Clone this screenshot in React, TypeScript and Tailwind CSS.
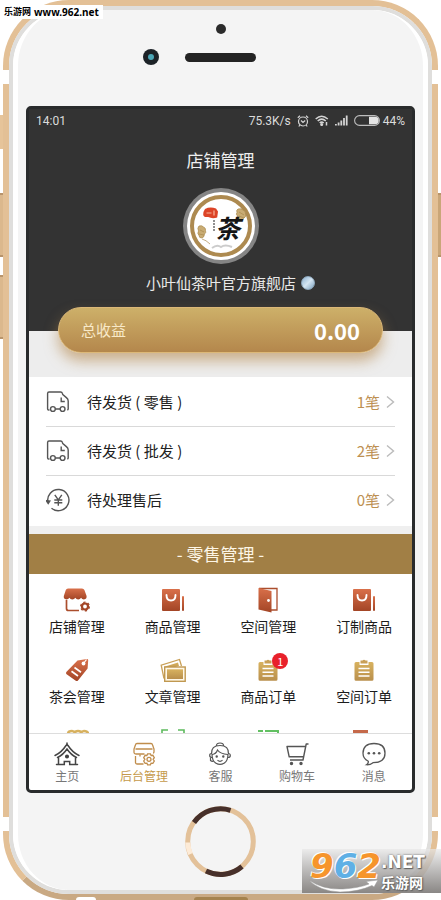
import type { ReactNode } from "react";

interface Todo {
  label: string;
  count: string;
  icon: ReactNode;
}

interface Entry {
  label: string;
  icon: ReactNode;
  badge?: number;
}

function Gradients() {
  return (
    <svg width="0" height="0" className="absolute" aria-hidden="true">
      <defs>
        <linearGradient id="red" x1="0" y1="0" x2="0" y2="1">
          <stop offset="0" stopColor="#d9704a" />
          <stop offset="1" stopColor="#a34526" />
        </linearGradient>
        <linearGradient id="gold" x1="0" y1="0" x2="0" y2="1">
          <stop offset="0" stopColor="#d8b25f" />
          <stop offset="1" stopColor="#b98f4c" />
        </linearGradient>
      </defs>
    </svg>
  );
}

/* ── List icons ─────────────────────────────────────────────── */

function TruckIcon() {
  return (
    <svg width="24" height="24" viewBox="0 0 24 24" fill="none" stroke="#555" strokeWidth="1.4" aria-hidden="true">
      <path d="M3.5 20H2.6Q1.6 20 1.6 19V3.4Q1.6 2 3 2h11.6q1.4 0 1.8 1.4l.4 1.2 3.6 3q1.8 1.5 1.8 3.4V19q0 .8-1 .8" />
      <path d="M15.2 7.5v4h3.6M9.3 19h4.9" />
      <circle cx="6.9" cy="19" r="2.4" />
      <circle cx="16.6" cy="19" r="2.4" />
    </svg>
  );
}

function RefundIcon() {
  return (
    <svg width="24" height="24" viewBox="0 0 24 24" fill="none" stroke="#555" strokeWidth="1.4" aria-hidden="true">
      <path d="M2 14.5A10.6 10.6 0 1 1 5.5 20.2" />
      <path d="M.3 12.6 3.8 13l-1.6 2.4z" fill="#555" />
      <path d="M8.8 6.8l3.5 5 3.5-5M12.3 11.8v6M8.3 12h8M8.3 14.8h8" />
    </svg>
  );
}

function Arrow() {
  return (
    <svg width="9" height="14" viewBox="0 0 9 14" fill="none" stroke="#bbb" strokeWidth="1.4" aria-hidden="true">
      <path d="M1 1.5 7.5 7 1 12.5" />
    </svg>
  );
}

/* ── Grid icons ─────────────────────────────────────────────── */

function StoreIcon() {
  return (
    <svg width="28" height="24" viewBox="0 0 28 24" fill="none" aria-hidden="true">
      <path
        d="M5 .5h14q1.8 0 2.4 1.6L23.6 8q.3 3.2-2.7 3.4-2 0-2.8-1.6-1 1.6-2.9 1.6T12.3 9.8q-1 1.6-3 1.6T6.4 9.8q-1 1.6-3 1.6Q.4 11.2.8 8L2.8 2.1Q3.4.5 5 .5z"
        fill="url(#red)"
      />
      <path d="M3.5 12v8.5q0 2 2 2H16" stroke="#ab4e2d" strokeWidth="1.7" />
      <circle cx="22" cy="18.5" r="3" stroke="#a34526" strokeWidth="2.2" />
      <circle cx="22" cy="18.5" r="4.4" stroke="#a34526" strokeWidth="1.2" strokeDasharray="2.3 2.3" />
    </svg>
  );
}

function BagIcon() {
  return (
    <svg width="24" height="24" viewBox="0 0 24 24" fill="none" aria-hidden="true">
      <rect x="1" y="1" width="18" height="22" rx="1" fill="url(#red)" />
      <path d="M5.5 7q0 5.5 4.5 5.5T14.5 7" stroke="#fff" strokeWidth="1.9" strokeLinecap="round" />
      <rect x="21" y="8" width="2" height="15" rx="1" fill="url(#red)" />
    </svg>
  );
}

function DoorIcon() {
  return (
    <svg width="24" height="26" viewBox="0 0 24 26" fill="none" aria-hidden="true">
      <path d="M3 1.5h18V23h-6" stroke="#ab4e2d" strokeWidth="1.3" />
      <path d="M2.5 1 15.5 4v21.5L2.5 22.5z" fill="url(#red)" />
      <circle cx="12.5" cy="13.5" r="1.4" fill="#fff" />
    </svg>
  );
}

function TagIcon() {
  return (
    <svg width="24" height="24" viewBox="0 0 24 24" fill="none" aria-hidden="true">
      <path d="M12.5 2.5 22 1q1.3 0 1.2 1.3l-.6 8.2L13 22.5q-1 1-2.2.2L1.6 16.2q-1.1-1-.3-2.2z" fill="url(#red)" />
      <circle cx="18.5" cy="5.5" r="1.9" fill="#fff" />
      <path d="M18.5 5.5 21.5 1.5" stroke="#fff" strokeWidth="1.2" />
      <path d="M9.5 9.5l6.5 4.7M6.5 13.3l6.5 4.7" stroke="#fff" strokeWidth="1.7" />
    </svg>
  );
}

function PicturesIcon() {
  return (
    <svg width="26" height="24" viewBox="0 0 26 24" fill="none" aria-hidden="true">
      <path d="M4 20.5 1.2 7.2 19.5 1.5l2 6.5" stroke="#c9a057" strokeWidth="1.3" />
      <path d="M5.5 12 4.3 8.7 18 4.5l1 3.5z" fill="url(#gold)" />
      <rect x="4.7" y="9" width="20.5" height="14.3" fill="#fff8e8" stroke="#c09850" strokeWidth="1.4" />
      <rect x="7" y="11.3" width="16" height="9.7" fill="url(#gold)" />
    </svg>
  );
}

function ClipboardIcon() {
  return (
    <svg width="24" height="24" viewBox="0 0 24 24" fill="none" aria-hidden="true">
      <path d="M4 4h3.5v3h9V4H20q1.5 0 1.5 1.5v15.8q0 1.5-1.5 1.5H4q-1.5 0-1.5-1.5V5.5Q2.5 4 4 4z" fill="url(#gold)" />
      <path d="M8.5 5.5v-3h2Q12 .8 13.5 2.5h2v3z" fill="#c9a057" />
      <path d="M6.5 10.5h11M6.5 14.3h11M6.5 18h11" stroke="#fff" strokeWidth="1.5" />
    </svg>
  );
}

function MedalIcon() {
  return (
    <svg width="24" height="24" viewBox="0 0 24 24" fill="none" stroke="url(#gold)" strokeWidth="2.5" aria-hidden="true">
      <path d="M3 6q0-3 4-3 2 0 3 2 0-2 3-2t3 2q1-2 3-2 4 0 4 3v14H3z" />
    </svg>
  );
}

function ScanIcon() {
  return (
    <svg width="24" height="24" viewBox="0 0 24 24" fill="none" stroke="#5cba5c" strokeWidth="1.6" aria-hidden="true">
      <path d="M1 7V2h6M17 2h6v5M23 17v5h-6M7 22H1v-5" />
    </svg>
  );
}

function ListIcon() {
  return (
    <svg width="24" height="24" viewBox="0 0 24 24" fill="none" stroke="#62c062" strokeWidth="2" aria-hidden="true">
      <path d="M2 3h5M9 3h13v18H9M2 9h5M2 15h5" />
    </svg>
  );
}

function BookIcon() {
  return (
    <svg width="24" height="24" viewBox="0 0 24 24" aria-hidden="true">
      <rect x="1" y="2" width="15" height="20" fill="#c5694a" />
    </svg>
  );
}

/* ── Tab icons ──────────────────────────────────────────────── */

function HomeIcon() {
  return (
    <svg width="26" height="24" viewBox="0 0 26 24" fill="none" stroke="#444" strokeWidth="1.5" strokeLinecap="round" aria-hidden="true">
      <path d="M1 13.5q6.5-3 11-10l1-1 1 1q4.5 7 11 10" />
      <path d="M3.5 15.5Q9 13 13 7q4 6 9.5 8.5M13 2.5V1M4.5 16v6M21.5 16v6M2.5 22.5h7.8v-3h5.4v3h7.8" />
      <circle cx="13" cy="14.5" r="1.3" fill="#444" />
    </svg>
  );
}

function ManageIcon() {
  return (
    <svg width="24" height="24" viewBox="0 0 24 24" fill="none" stroke="#c08d4c" strokeWidth="1.3" aria-hidden="true">
      <path d="M5 1.5h14q1.2 0 1.5 1.2L22 7v3q0 1-1 1M5 1.5q-1.2 0-1.5 1.2L2 7v3.5q0 1.5 2 1.5h8.5M3.5 7H20.5" />
      <path d="M3.5 14v6.5q0 1.5 1.5 1.5h6.5M8 12.5v2" />
      <circle cx="17" cy="17.3" r="2" />
      <path d="M15.6 11.8h2.8l.7 1.7 1.8-.2 1.4 2.3-1.2 1.7 1.2 1.7-1.4 2.3-1.8-.2-.7 1.7h-2.8l-.7-1.7-1.8.2-1.4-2.3 1.2-1.7-1.2-1.7 1.4-2.3 1.8.2z" />
    </svg>
  );
}

function ServiceIcon() {
  return (
    <svg width="24" height="24" viewBox="0 0 24 24" fill="none" stroke="#555" strokeWidth="1.2" aria-hidden="true">
      <path d="M8.5 3.5Q8.5 1 12 1t3.5 2.5M3.5 12Q3 3.5 12 3.5T20.5 12" />
      <path d="M4 12q0 7 4 9.3 4 2.2 8 0Q20 19 20 12M4.3 12.5Q8 12 9.5 8q3 4 10.3 4.5" />
      <path d="M3.7 11.5q-2 0-2 2t2.3 2M20.3 11.5q2 0 2 2t-2.3 2M9.5 18.3q2.5 2 5 0" />
      <circle cx="8.7" cy="14.5" r=".6" fill="#555" />
      <circle cx="15.3" cy="14.5" r=".6" fill="#555" />
      <path d="M2.5 16v2.5q1 1 3 .8" />
    </svg>
  );
}

function CartIcon() {
  return (
    <svg width="24" height="24" viewBox="0 0 24 24" fill="none" stroke="#555" strokeWidth="1.4" strokeLinejoin="round" aria-hidden="true">
      <path d="M23.5 2h-2.3L18 18H5M20.4 4.5H2l2.2 10.3h14.3" />
      <circle cx="6.5" cy="21.5" r="1" fill="#555" />
      <circle cx="16" cy="21.5" r="1" fill="#555" />
    </svg>
  );
}

function MessageIcon() {
  return (
    <svg width="24" height="24" viewBox="0 0 24 24" fill="none" stroke="#555" strokeWidth="1.3" aria-hidden="true">
      <path d="M6.3 19.3Q1 16.5 1 11.2 1 1.5 12 1.5t11 9.7Q23 20.5 11 20.7q-3 2.3-6.5 2 2-1.3 1.8-3.4z" />
      <g fill="#555" stroke="none">
        <circle cx="6.8" cy="11.3" r="1.3" />
        <circle cx="12" cy="11.3" r="1.3" />
        <circle cx="17.2" cy="11.3" r="1.3" />
      </g>
    </svg>
  );
}

const todos: Todo[] = [
  { label: "待发货 ( 零售 )", count: "1笔", icon: <TruckIcon /> },
  { label: "待发货 ( 批发 )", count: "2笔", icon: <TruckIcon /> },
  { label: "待处理售后", count: "0笔", icon: <RefundIcon /> },
];

const entries: Entry[] = [
  { label: "店铺管理", icon: <StoreIcon /> },
  { label: "商品管理", icon: <BagIcon /> },
  { label: "空间管理", icon: <DoorIcon /> },
  { label: "订制商品", icon: <BagIcon /> },
  { label: "茶会管理", icon: <TagIcon /> },
  { label: "文章管理", icon: <PicturesIcon /> },
  { label: "商品订单", icon: <ClipboardIcon />, badge: 1 },
  { label: "空间订单", icon: <ClipboardIcon /> },
  { label: "", icon: <MedalIcon /> },
  { label: "", icon: <ScanIcon /> },
  { label: "", icon: <ListIcon /> },
  { label: "", icon: <BookIcon /> },
];

const tabs: Entry[] = [
  { label: "主页", icon: <HomeIcon /> },
  { label: "后台管理", icon: <ManageIcon /> },
  { label: "客服", icon: <ServiceIcon /> },
  { label: "购物车", icon: <CartIcon /> },
  { label: "消息", icon: <MessageIcon /> },
];

function StatusBar() {
  return (
    <div className="flex h-[23px] items-center justify-between px-[7px] font-['Roboto','Noto_Sans_CJK_SC',sans-serif] text-xs text-[#dcdcdc]">
      <span>14:01</span>
      <div className="flex items-center gap-[6px]">
        <span>75.3K/s</span>
        <svg width="12" height="12" viewBox="0 0 12 12" fill="none" stroke="#d4d4d4" strokeWidth="1.2" aria-hidden="true">
          <circle cx="6" cy="6.5" r="4.5" />
          <path d="M4 5.5l2 2 2.2-2M.8 2.8 3 .8M11.2 2.8 9 .8M2.8 10.2 1.8 11.5M9.2 10.2l1 1.3" />
        </svg>
        <svg width="14" height="11" viewBox="0 0 14 11" fill="none" stroke="#d4d4d4" strokeWidth="1.5" aria-hidden="true">
          <path d="M.7 4Q6.5-1.5 12.8 4M2.7 6Q6.7 2.3 10.8 6M4.7 8q2-1.8 4 0" />
          <circle cx="6.7" cy="9.5" r=".8" fill="#d4d4d4" />
          <path d="M11.5 7v3.5" />
        </svg>
        <svg width="13" height="11" viewBox="0 0 13 11" fill="#d4d4d4" aria-hidden="true">
          <path d="M0 9h1.8v1.5H0zM2.7 7.5h1.8v3H2.7zM5.4 5.5h1.8v5H5.4zM8.1 3h1.8v7.5H8.1zM10.8 .5h1.8v10h-1.8z" />
        </svg>
        <div className="flex items-center gap-[3px]">
          <svg width="26" height="11" viewBox="0 0 26 11" aria-hidden="true">
            <rect x=".6" y=".6" width="24.8" height="9.8" rx="4.9" fill="none" stroke="#bdbdbd" strokeWidth="1.1" />
            <path d="M15 1.8h6a3.7 3.7 0 0 1 0 7.4h-6z" fill="#e4e4e4" />
          </svg>
          <span>44%</span>
        </div>
      </div>
    </div>
  );
}

function Avatar() {
  return (
    <svg width="76" height="76" viewBox="0 0 76 76" className="mx-auto" role="img" aria-label="茶">
      <circle cx="38" cy="38" r="38" fill="#858585" />
      <circle cx="38" cy="38" r="34" fill="#fff" />
      <circle cx="38" cy="38" r="29" fill="none" stroke="#ad8a50" strokeWidth="4" />
      <path d="M22 21q5-2.5 11-.5l2 3-.8 6q-5 1.5-9-.5-5 .5-5-2.5 0-3 1.8-5.5z" fill="#dc4427" />
      <path d="M23.5 25h5M31 22.5v5" stroke="#f8b59c" strokeWidth="1.2" />
      <path d="M31 32v12" stroke="#555" strokeWidth="1.3" strokeDasharray="2 1" />
      <g fill="#c9ac74" stroke="#a98a4e" strokeWidth=".7">
        <path d="M55 21q3-1 5 1 3 1 2.5 4 1 3-2 4.5-1 3-3.5 1-3-1-2.5-3.5-2-2-.5-3.5-1-2.5 1-3.5z" />
        <path d="M16 38q3-1 4.5 1 2.5 1 2 3.5 1 2-1 3.5 0 3-2.5 4-3 0-3-2.5-2-2-.5-4.5-1.5-3 .5-5z" />
        <path d="M56 24l5 3M56 28l5 2M17 42l4 2M16 46l5 1M19 51q4 1 8 5" fill="none" />
      </g>
      <path d="M29 60q5-4 9-1 4-3 11 0" stroke="#ccc" strokeWidth="2" fill="none" />
      <text x="32" y="50" className="font-['Noto_Sans_CJK_SC',sans-serif] text-[25px] font-bold italic" fill="#151515">
        茶
      </text>
    </svg>
  );
}

function Watermark() {
  return (
    <div className="absolute right-0 bottom-[7px] flex h-11 w-[139px] bg-linear-to-b from-[#e8e8e8]/70 to-[#8a8785] pl-2 font-['Noto_Sans_CJK_SC',sans-serif]">
      <div className="font-['DejaVu_Sans',sans-serif] text-[34px] leading-[34px] font-bold italic text-[#f6952c] [text-shadow:1px_1px_0_#fff,-1px_-1px_0_#fff]">
        9<span className="text-[#5fb0e5]">6</span>2
      </div>
      <div className="pt-[3px] text-white [text-shadow:0_0_2px_#555,1px_1px_1px_#666]">
        <p className="font-['DejaVu_Sans',sans-serif] text-[17px] leading-5 font-bold">.NET</p>
        <p className="text-sm leading-[21px] font-bold">乐游网</p>
      </div>
      <svg width="72" height="14" viewBox="0 0 72 14" className="absolute bottom-0 left-[6px]" aria-hidden="true">
        <path d="M1 1q14 10 34 9 16-1 26-5l-3-2.5L70 1l-4 7-2-1.5Q50 13 32 13 11 12 1 1z" fill="#fff" stroke="#999" strokeWidth=".5" />
      </svg>
    </div>
  );
}

function HomeButton() {
  return (
    <button aria-label="Home" className="mx-auto mt-[13px] block">
      <svg width="71" height="71" viewBox="0 0 71 71" fill="none" strokeWidth="5">
        <circle cx="35.5" cy="35.5" r="32.8" stroke="#e3c199" />
        <path d="M9 16.5A32.8 32.8 0 0 1 45.5 4.3M57 60.5A32.8 32.8 0 0 1 21 65" stroke="#47302a" />
        <path d="M2.8 36.5A32.8 32.8 0 0 0 5.5 48" stroke="#fdebd7" />
      </svg>
    </button>
  );
}

export default function App() {
  return (
    <div className="relative overflow-hidden bg-white font-['Noto_Sans_CJK_SC',sans-serif]">
      <Gradients />

      {/* Side buttons */}
      <div className="absolute top-[115px] left-0 h-[34px] w-1 bg-[#e6c49a]" />
      <div className="absolute top-[193px] left-0 h-16 w-1 border-y-2 border-[#b8946c] bg-[#dbb88d]" />
      <div className="absolute top-[275px] left-0 h-16 w-1 border-y-2 border-[#b8946c] bg-[#dbb88d]" />
      <div className="absolute top-[193px] right-0 h-16 w-1 border-y-2 border-[#b8946c] bg-[#c9a679]" />

      <div className="relative mx-[3px] rounded-[66px] border-[6px] border-[#e3c096] border-b-[#c9a983]">
        {/* Antenna gaps */}
        <div className="absolute top-16 -left-[6px] h-[14px] w-[6px] bg-white" />
        <div className="absolute top-16 -right-[6px] h-[14px] w-[6px] bg-white" />
        <div className="absolute bottom-[63px] -left-[6px] h-[14px] w-[6px] bg-white" />
        <div className="absolute -right-[6px] bottom-[63px] h-[14px] w-[6px] bg-white" />

        {/* Jack and charging port */}
        <div className="absolute -bottom-[6px] left-[67px] h-[3px] w-5 rounded-t-full bg-white" />
        <div className="absolute inset-x-0 -bottom-[6px] mx-auto h-[3px] w-[54px] rounded-t-sm bg-[#a5834f]" />

        <div className="rounded-[60px] border-4 border-[#dfdedc] bg-white">
          <div className="rounded-[56px] border-x-[5px] border-white bg-[#f4f4f4] px-2 pb-[13px]">
            <div className="flex h-24 flex-col items-center pt-[14px]">
              <div className="size-[10px] rounded-full bg-[#2b2b2b]" />
              <div className="mt-[15px] flex items-center gap-[26px]">
                <div className="flex size-4 items-center justify-center rounded-full bg-[#1c2227]">
                  <div className="size-[6px] rounded-full bg-[#4aa5b5]" />
                </div>
                <div className="h-[9px] w-[71px] rounded-full bg-[#232323]" />
                <div className="w-4" />
              </div>
            </div>

            {/* Screen */}
            <div className="rounded-[5px] border-[3px] border-[#292b2c] bg-white">
              <header className="bg-[#333]">
                <StatusBar />
                <h1 className="text-center text-[17px] leading-[56px] text-[#efefef]">店铺管理</h1>
                <Avatar />
                <p className="flex items-center justify-center gap-[5px] pb-[5px] pl-5 text-[15px] leading-[38px] text-[#e8e8e8]">
                  小叶仙茶叶官方旗舰店
                  <span className="size-[14px] rounded-full border border-[#8fa9bd] bg-linear-to-br from-[#8fb3d1] via-[#d5e6f3] to-[#7fa3c0]" />
                </p>
                <div className="relative mx-[29px] -mb-[22px] flex h-[46px] items-center justify-between rounded-full border border-[#dcb878] bg-linear-to-b from-[#cdb069] to-[#b4874c] px-[22px] shadow-[0_8px_14px_rgba(180,135,76,0.6)]">
                  <span className="text-[15px] text-[#f8e9c8]">总收益</span>
                  <span className="text-[22px] font-bold text-white">0.00</span>
                </div>
              </header>
              <div className="h-[46px] bg-[#ededed]" />

              <ul className="px-[17px] pt-px pb-px">
                {todos.map((todo) => (
                  <li key={todo.label} className="h-[49px] border-b border-[#d9d9d9] last:border-transparent">
                    <a href="#" className="flex h-full items-center">
                      {todo.icon}
                      <span className="ml-[17px] flex-1 text-[15px] text-[#222]">{todo.label}</span>
                      <span className="mr-[6px] text-[15px] text-[#bd9052]">{todo.count}</span>
                      <Arrow />
                    </a>
                  </li>
                ))}
              </ul>
              <div className="h-2 bg-[#efefef]" />

              <section>
                <h2 className="bg-[#a17f45] text-center text-[17px] leading-10 text-[#fdf6e6]">- 零售管理 -</h2>
                <div className="grid h-[159px] auto-rows-[70px] grid-cols-4 overflow-hidden">
                  {entries.map((entry, i) => (
                    <button key={i} className="flex flex-col items-center gap-[2px] pt-[14px]">
                      <span className="relative flex h-6 items-center">
                        {entry.icon}
                        {entry.badge && (
                          <span className="absolute -top-[5px] -right-2 size-4 rounded-full bg-[#e8212b] text-center text-[11px] leading-4 text-white">
                            {entry.badge}
                          </span>
                        )}
                      </span>
                      <span className="text-sm leading-6 text-[#1c1c1c]">{entry.label}</span>
                    </button>
                  ))}
                </div>
              </section>

              <nav className="grid h-[57px] grid-cols-5 border-t border-[#ddd]">
                {tabs.map((tab, i) => (
                  <a
                    key={tab.label}
                    href="#"
                    className={`flex flex-col items-center pt-2 text-xs leading-5 ${i === 1 ? "text-[#c59a4b]" : "text-[#777]"}`}
                  >
                    {tab.icon}
                    {tab.label}
                  </a>
                ))}
              </nav>
            </div>

            <HomeButton />
          </div>
        </div>
      </div>

      {/* Site marks */}
      <p className="absolute top-[5px] left-0 flex h-[14px] items-center gap-[3px] bg-white px-1 text-[9px] font-bold text-black">
        乐游网 <span className="font-['Noto_Sans',sans-serif] text-[10px] leading-[14px]">www.962.net</span>
      </p>
      <Watermark />
    </div>
  );
}
